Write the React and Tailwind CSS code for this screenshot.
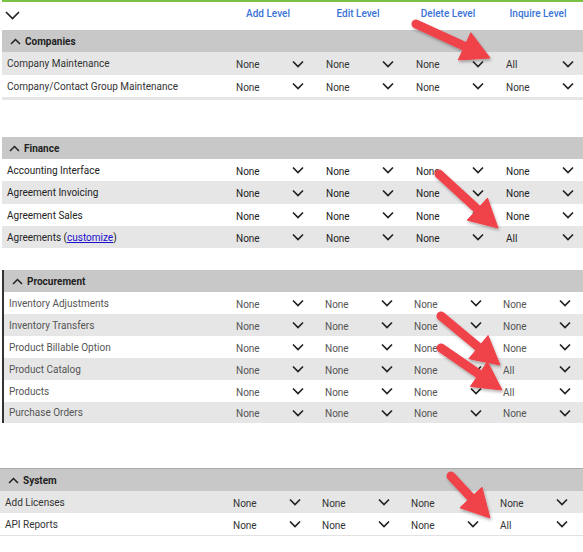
import React from "react";

function Chev({ className = "" }) {
  return (
    <svg width="12" height="8" viewBox="0 0 12 8" className={className}>
      <path d="M1 1.5 L6 6.5 L11 1.5" fill="none" stroke="#222" strokeWidth="1.7" strokeLinejoin="miter" />
    </svg>
  );
}

function Up() {
  return (
    <svg width="11" height="7" viewBox="0 0 11 7">
      <path d="M1 6 L5.5 1.5 L10 6" fill="none" stroke="#222" strokeWidth="1.5" />
    </svg>
  );
}

function Sel({ v, w }) {
  return (
    <div className={`${w} shrink-0 flex items-center h-full`}>
      <span className="w-[60px] pl-[4px] pt-[2px]">{v}</span>
      <Chev />
    </div>
  );
}

function Row({ label, vals, bg, h, lw, cw }) {
  return (
    <div className={`flex items-center ${bg} ${h}`}>
      <div className={`${lw} shrink-0 pl-[5px] whitespace-nowrap`}>{label}</div>
      {vals.map((v, i) => (
        <Sel key={i} v={v} w={cw} />
      ))}
    </div>
  );
}

function SecHeader({ title, h, pl = "pl-[8px]" }) {
  return (
    <div className={`flex items-center bg-[#c8c8c8] ${h} ${pl} gap-[4px]`}>
      <Up />
      <span className="font-bold text-[#222]">{title}</span>
    </div>
  );
}

function Arrow({ x1, y1, x2, y2 }) {
  const dx = x2 - x1;
  const dy = y2 - y1;
  const L = Math.sqrt(dx * dx + dy * dy);
  const ux = dx / L;
  const uy = dy / L;
  const hl = 28;
  const hw = 15;
  const bx = x2 - ux * hl;
  const by = y2 - uy * hl;
  const px = -uy;
  const py = ux;
  const pts = `${x2},${y2} ${bx + px * hw},${by + py * hw} ${bx - px * hw},${by - py * hw}`;
  return (
    <g filter="url(#sh)">
      <line x1={x1} y1={y1} x2={bx + ux * 2} y2={by + uy * 2} stroke="#f0424a" strokeWidth="9" strokeLinecap="round" />
      <polygon points={pts} fill="#f0424a" strokeLinejoin="round" stroke="#f0424a" strokeWidth="1" />
    </g>
  );
}

export default function App() {
  const font = { fontFamily: "Roboto, 'Liberation Sans', sans-serif" };
  return (
    <div className="relative w-[583px] h-[552px] bg-white overflow-hidden text-[10px] text-[#333]" style={font}>
      <div className="h-[2px] bg-[#7cc242] ml-[2px]" />
      {/* column header */}
      <div className="flex h-[28px]">
        <div className="w-[232px] shrink-0 pl-[5px] pt-[9px]">
          <svg width="15" height="9" viewBox="0 0 15 9">
            <path d="M1 1 L7.5 7.5 L14 1" fill="none" stroke="#222" strokeWidth="1.6" />
          </svg>
        </div>
        {["Add Level", "Edit Level", "Delete Level", "Inquire Level"].map((t) => (
          <div key={t} className="w-[90px] shrink-0">
            <div className="w-[72px] text-center pt-[4px] font-medium text-[#3a74d8] whitespace-nowrap">{t}</div>
          </div>
        ))}
      </div>

      {/* Companies */}
      <div className="ml-[2px]">
        <SecHeader title="Companies" h="h-[22px]" />
        <Row label="Company Maintenance" vals={["None", "None", "None", "All"]} bg="bg-[#e6e6e6]" h="h-[23px]" lw="w-[230px]" cw="w-[90px]" />
        <Row label="Company/Contact Group Maintenance" vals={["None", "None", "None", "None"]} bg="bg-white" h="h-[22px]" lw="w-[230px]" cw="w-[90px]" />
        <div className="h-[3px] bg-[#e6e6e6]" />
      </div>

      <div className="h-[37px]" />

      {/* Finance */}
      <div className="ml-[2px] text-[#222]">
        <SecHeader title="Finance" h="h-[22px]" pl="pl-[7px]" />
        <Row label="Accounting Interface" vals={["None", "None", "None", "None"]} bg="bg-white" h="h-[22px]" lw="w-[230px]" cw="w-[90px]" />
        <Row label="Agreement Invoicing" vals={["None", "None", "None", "None"]} bg="bg-[#e6e6e6]" h="h-[23px]" lw="w-[230px]" cw="w-[90px]" />
        <Row label="Agreement Sales" vals={["None", "None", "None", "None"]} bg="bg-white" h="h-[22px]" lw="w-[230px]" cw="w-[90px]" />
        <Row
          label={
            <span>
              Agreements (<span className="text-[#1a0dcc] underline">customize</span>)
            </span>
          }
          vals={["None", "None", "None", "All"]}
          bg="bg-[#e6e6e6]"
          h="h-[22px]"
          lw="w-[230px]"
          cw="w-[90px]"
        />
      </div>

      <div className="h-[22px]" />

      {/* Procurement */}
      <div className="ml-[2px] border-l-2 border-[#333] text-[#555]">
        <SecHeader title="Procurement" h="h-[22px]" pl="pl-[8px]" />
        <Row label="Inventory Adjustments" vals={["None", "None", "None", "None"]} bg="bg-white" h="h-[22px]" lw="w-[228px]" cw="w-[89px]" />
        <Row label="Inventory Transfers" vals={["None", "None", "None", "None"]} bg="bg-[#e6e6e6]" h="h-[22px]" lw="w-[228px]" cw="w-[89px]" />
        <Row label="Product Billable Option" vals={["None", "None", "None", "None"]} bg="bg-white" h="h-[22px]" lw="w-[228px]" cw="w-[89px]" />
        <Row label="Product Catalog" vals={["None", "None", "None", "All"]} bg="bg-[#e6e6e6]" h="h-[22px]" lw="w-[228px]" cw="w-[89px]" />
        <Row label="Products" vals={["None", "None", "None", "All"]} bg="bg-white" h="h-[22px]" lw="w-[228px]" cw="w-[89px]" />
        <Row label="Purchase Orders" vals={["None", "None", "None", "None"]} bg="bg-[#e6e6e6]" h="h-[21px]" lw="w-[228px]" cw="w-[89px]" />
      </div>

      <div className="h-[45px]" />

      {/* System */}
      <div className="border-t border-[#aaa] border-b border-b-[#e2e2e2]">
        <SecHeader title="System" h="h-[22px]" pl="pl-[8px]" />
        <Row label="Add Licenses" vals={["None", "None", "None", "None"]} bg="bg-[#e6e6e6]" h="h-[22px]" lw="w-[229px]" cw="w-[89px]" />
        <Row label="API Reports" vals={["None", "None", "None", "All"]} bg="bg-white" h="h-[22px]" lw="w-[229px]" cw="w-[89px]" />
      </div>

      <svg className="absolute inset-0 pointer-events-none" width="583" height="552" viewBox="0 0 583 552">
        <defs>
          <filter id="sh" x="-20%" y="-20%" width="140%" height="140%">
            <feDropShadow dx="1" dy="2" stdDeviation="1.5" floodColor="#000" floodOpacity="0.3" />
          </filter>
        </defs>
        <Arrow x1={416} y1={24} x2={490} y2={58} />
        <Arrow x1={439} y1={174} x2={498} y2={228} />
        <Arrow x1={441} y1={316} x2={500} y2={365} />
        <Arrow x1={441} y1={348} x2={502} y2={390} />
        <Arrow x1={451} y1={476} x2={490} y2={518} />
      </svg>
    </div>
  );
}
